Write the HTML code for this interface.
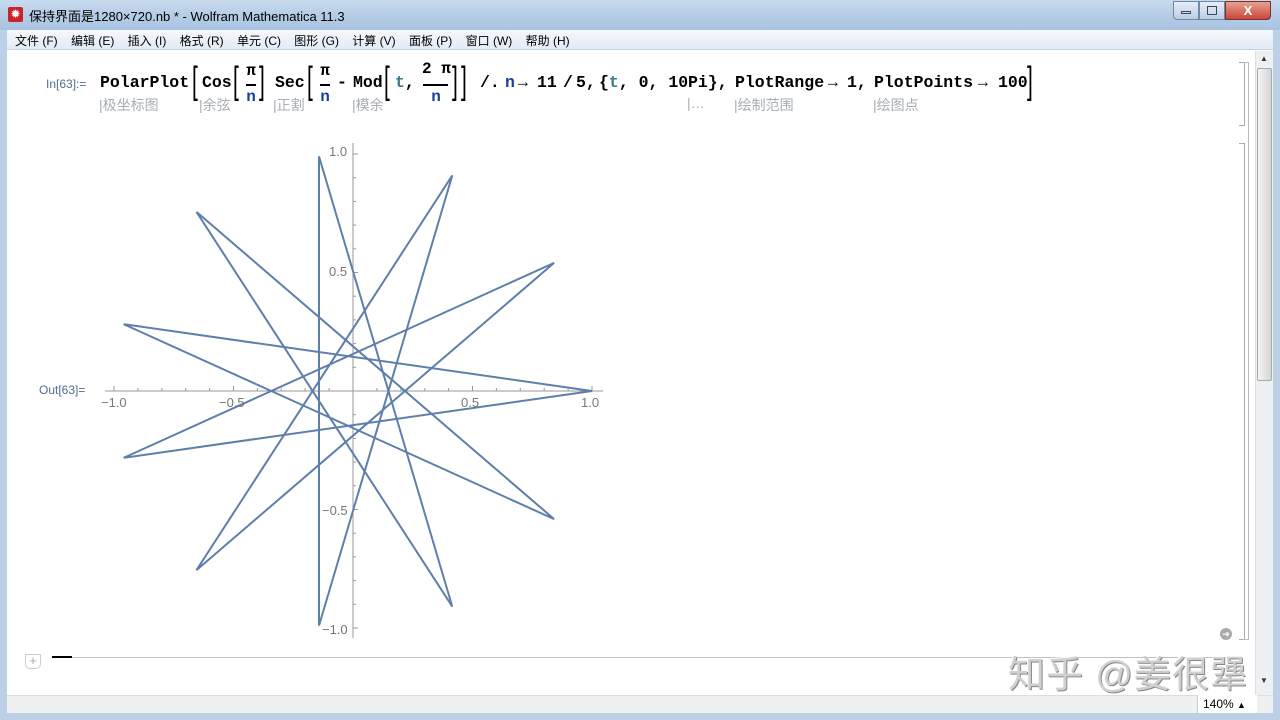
<!DOCTYPE html>
<html><head><meta charset="utf-8"><style>
*{margin:0;padding:0;box-sizing:border-box}
body{width:1280px;height:720px;overflow:hidden;background:#fff;font-family:"Liberation Sans","Noto Sans CJK SC",sans-serif;position:relative}
.a{position:absolute;white-space:nowrap}
.m{font-family:"Liberation Mono",monospace;font-weight:bold;font-size:16.5px;color:#000;top:73px}
.b{color:#1a3fa0}
.t{color:#3a7a8a}
.h{font-size:14px;color:#a7adb3;top:95px}
.br{font-family:"Liberation Sans",sans-serif;font-weight:normal;font-size:38px;top:60px;transform:scaleX(0.55);transform-origin:left}
.fr{font-family:"Liberation Mono",monospace;font-weight:bold;font-size:16px;text-align:center}
</style></head><body>
<div class="a" style="left:0;top:0;width:1280px;height:30px;background:linear-gradient(#c9dbee,#b6cde6 50%,#a9c3e0)"></div>
<div class="a" style="left:8px;top:7px;width:15px;height:15px;background:#c8242a;border-radius:2px;color:#fff;font-size:12px;line-height:15px;text-align:center">✹</div>
<div class="a" style="left:29px;top:6px;font-size:13px;color:#000">保持界面是1280×720.nb * - Wolfram Mathematica 11.3</div>
<div class="a" style="left:1173px;top:1px;width:26px;height:19px;border:1px solid #6f89a8;border-radius:0 0 0 4px;background:linear-gradient(#e6eef8,#bccde3)"></div>
<div class="a" style="left:1199px;top:1px;width:26px;height:19px;border:1px solid #6f89a8;background:linear-gradient(#e6eef8,#bccde3)"></div>
<div class="a" style="left:1225px;top:1px;width:46px;height:19px;border:1px solid #7a3030;border-radius:0 0 4px 0;background:linear-gradient(#e8a090,#c8463a);color:#fff;font-size:13px;text-align:center;line-height:18px;font-weight:bold">X</div>
<div class="a" style="left:1181px;top:11px;width:10px;height:3px;border:1px solid #445"></div>
<div class="a" style="left:1207px;top:6px;width:10px;height:9px;border:1px solid #445"></div>
<div class="a" style="left:0;top:30px;width:7px;height:690px;background:#bcd1e8"></div>
<div class="a" style="left:1273px;top:30px;width:7px;height:690px;background:#bcd1e8"></div>
<div class="a" style="left:0;top:713px;width:1280px;height:7px;background:#bcd1e8"></div>
<div class="a" style="left:7px;top:30px;width:1266px;height:20px;background:linear-gradient(#f5f8fc,#e3ebf5);border-bottom:1px solid #c5d3e3"></div>
<div class="a" style="left:15px;top:32px;font-size:12px;color:#000">文件 (F)&nbsp;&nbsp;&nbsp; 编辑 (E)&nbsp;&nbsp;&nbsp; 插入 (I)&nbsp;&nbsp;&nbsp; 格式 (R)&nbsp;&nbsp;&nbsp; 单元 (C)&nbsp;&nbsp;&nbsp; 图形 (G)&nbsp;&nbsp;&nbsp; 计算 (V)&nbsp;&nbsp;&nbsp; 面板 (P)&nbsp;&nbsp;&nbsp; 窗口 (W)&nbsp;&nbsp;&nbsp; 帮助 (H)</div>
<div class="a" style="left:1255px;top:51px;width:18px;height:645px;background:#eef0f2;border-left:1px solid #dde"></div>
<div class="a" style="left:1257px;top:68px;width:15px;height:313px;background:linear-gradient(90deg,#f4f4f4,#d6d6d6);border:1px solid #a8a8a8;border-radius:2px"></div>
<div class="a" style="left:1260px;top:54px;font-size:8px;color:#333">▲</div>
<div class="a" style="left:1260px;top:676px;font-size:8px;color:#333">▼</div>
<div class="a" style="left:7px;top:695px;width:1266px;height:18px;background:#f0f0f0;border-top:1px solid #ddd"></div>
<div class="a" style="left:1197px;top:695px;width:60px;height:18px;background:#fff;border-left:1px solid #ccc"></div>
<div class="a" style="left:1203px;top:697px;font-size:12px;color:#000">140% <span style="font-size:9px">▲</span></div>
<div class="a" style="left:1239px;top:62px;width:6px;height:64px;border:1px solid #aaa;border-left:none"></div>
<div class="a" style="left:1239px;top:143px;width:6px;height:497px;border:1px solid #aaa;border-left:none"></div>
<div class="a" style="left:1243px;top:62px;width:6px;height:578px;border:1px solid #bbb;border-left:none"></div>
<div class="a" style="left:1220px;top:628px;width:12px;height:12px;border-radius:50%;background:#aaa;color:#fff;font-size:9px;line-height:12px;text-align:center">➔</div>
<div class="a" style="left:52px;top:657px;width:1188px;height:1px;background:#c0c0c0"></div>
<div class="a" style="left:52px;top:656px;width:20px;height:2px;background:#000"></div>
<div class="a" style="left:25px;top:654px;width:16px;height:15px;border:1px solid #ccc;border-radius:0 0 5px 5px;color:#aaa;font-size:13px;line-height:12px;text-align:center">+</div>
<div class="a" style="left:46px;top:77px;font-size:12px;color:#4e6e8e">In[63]:=</div>
<div class="a" style="left:39px;top:383px;font-size:12px;color:#4e6e8e">Out[63]=</div>
<div class="a m" style="left:100px">PolarPlot</div>
<div class="a m br" style="left:192px">[</div>
<div class="a m" style="left:202px">Cos</div>
<div class="a m br" style="left:233px">[</div>
<div class="a fr" style="left:244px;top:62px;width:14px">π</div>
<div class="a" style="left:246px;top:84px;width:10px;height:2px;background:#000"></div>
<div class="a fr b" style="left:244px;top:88px;width:14px">n</div>
<div class="a m br" style="left:259px">]</div>
<div class="a m" style="left:275px">Sec</div>
<div class="a m br" style="left:307px">[</div>
<div class="a fr" style="left:318px;top:62px;width:14px">π</div>
<div class="a" style="left:320px;top:84px;width:10px;height:2px;background:#000"></div>
<div class="a fr b" style="left:318px;top:88px;width:14px">n</div>
<div class="a m" style="left:337px">-</div>
<div class="a m" style="left:353px">Mod</div>
<div class="a m br" style="left:384px">[</div>
<div class="a m t" style="left:395px">t<span style="color:#000">,</span></div>
<div class="a fr" style="left:422px;top:60px;width:26px">2 π</div>
<div class="a" style="left:423px;top:84px;width:25px;height:2px;background:#000"></div>
<div class="a fr b" style="left:428px;top:88px;width:16px">n</div>
<div class="a m br" style="left:452px">]</div>
<div class="a m br" style="left:461px">]</div>
<div class="a m" style="left:480px">/.</div>
<div class="a m b" style="left:505px">n</div>
<div class="a m" style="left:518px">→</div>
<div class="a m" style="left:537px">11</div>
<div class="a m" style="left:563px">/</div>
<div class="a m" style="left:576px">5,</div>
<div class="a m" style="left:599px">{<span class="t">t</span>, 0, 10</div>
<div class="a m" style="left:688px">Pi},</div>
<div class="a m" style="left:735px">PlotRange</div>
<div class="a m" style="left:828px">→</div>
<div class="a m" style="left:847px">1,</div>
<div class="a m" style="left:874px">PlotPoints</div>
<div class="a m" style="left:978px">→</div>
<div class="a m" style="left:998px">100</div>
<div class="a m br" style="left:1027px">]</div>
<div class="a h" style="left:99px">|极坐标图</div>
<div class="a h" style="left:199px">|余弦</div>
<div class="a h" style="left:273px">|正割</div>
<div class="a h" style="left:352px">|模余</div>
<div class="a h" style="left:687px">|…</div>
<div class="a h" style="left:734px">|绘制范围</div>
<div class="a h" style="left:873px">|绘图点</div>
<svg class="a" style="left:0;top:0" width="1280" height="720">
<g stroke="#999" stroke-width="1">
<line x1="105" y1="391" x2="603" y2="391"/>
<line x1="353" y1="143" x2="353" y2="638"/>
</g>
<g stroke="#999" stroke-width="1" id="tk"></g>
<polyline fill="none" stroke="#5e7fac" stroke-width="2" stroke-linejoin="miter" points="592,391 123.7,324.2 554.1,519.1 196.5,211.9 452.3,606.6 319,156.4 319,625.6 452.3,175.4 196.5,570.1 554.1,262.9 123.7,457.8 592,391"/>
<g font-family="Liberation Sans,sans-serif" font-size="13" fill="#777">
<text x="101" y="407">−1.0</text>
<text x="219" y="407">−0.5</text>
<text x="461" y="407">0.5</text>
<text x="581" y="407">1.0</text>
<text x="329" y="156">1.0</text>
<text x="329" y="276">0.5</text>
<text x="322" y="515">−0.5</text>
<text x="322" y="634">−1.0</text>
</g>
</svg>
<script>
var g=document.getElementById('tk'),s='';
for(var i=-10;i<=10;i++){if(i==0)continue;var L=(i%5==0)?5:3;var x=353+23.9*i,y=391-23.7*i;
s+='<line x1="'+x+'" y1="391" x2="'+x+'" y2="'+(391-L)+'"/>';
s+='<line x1="353" y1="'+y+'" x2="'+(353+L)+'" y2="'+y+'"/>';}
g.innerHTML=s;
</script>
<div class="a" style="left:1008px;top:644px;font-size:37px;color:#d0d0d0;text-shadow:1px 1px 0 #888,-1px -1px 0 #fff;letter-spacing:1px">知乎 @姜很犟</div>
</body></html>
